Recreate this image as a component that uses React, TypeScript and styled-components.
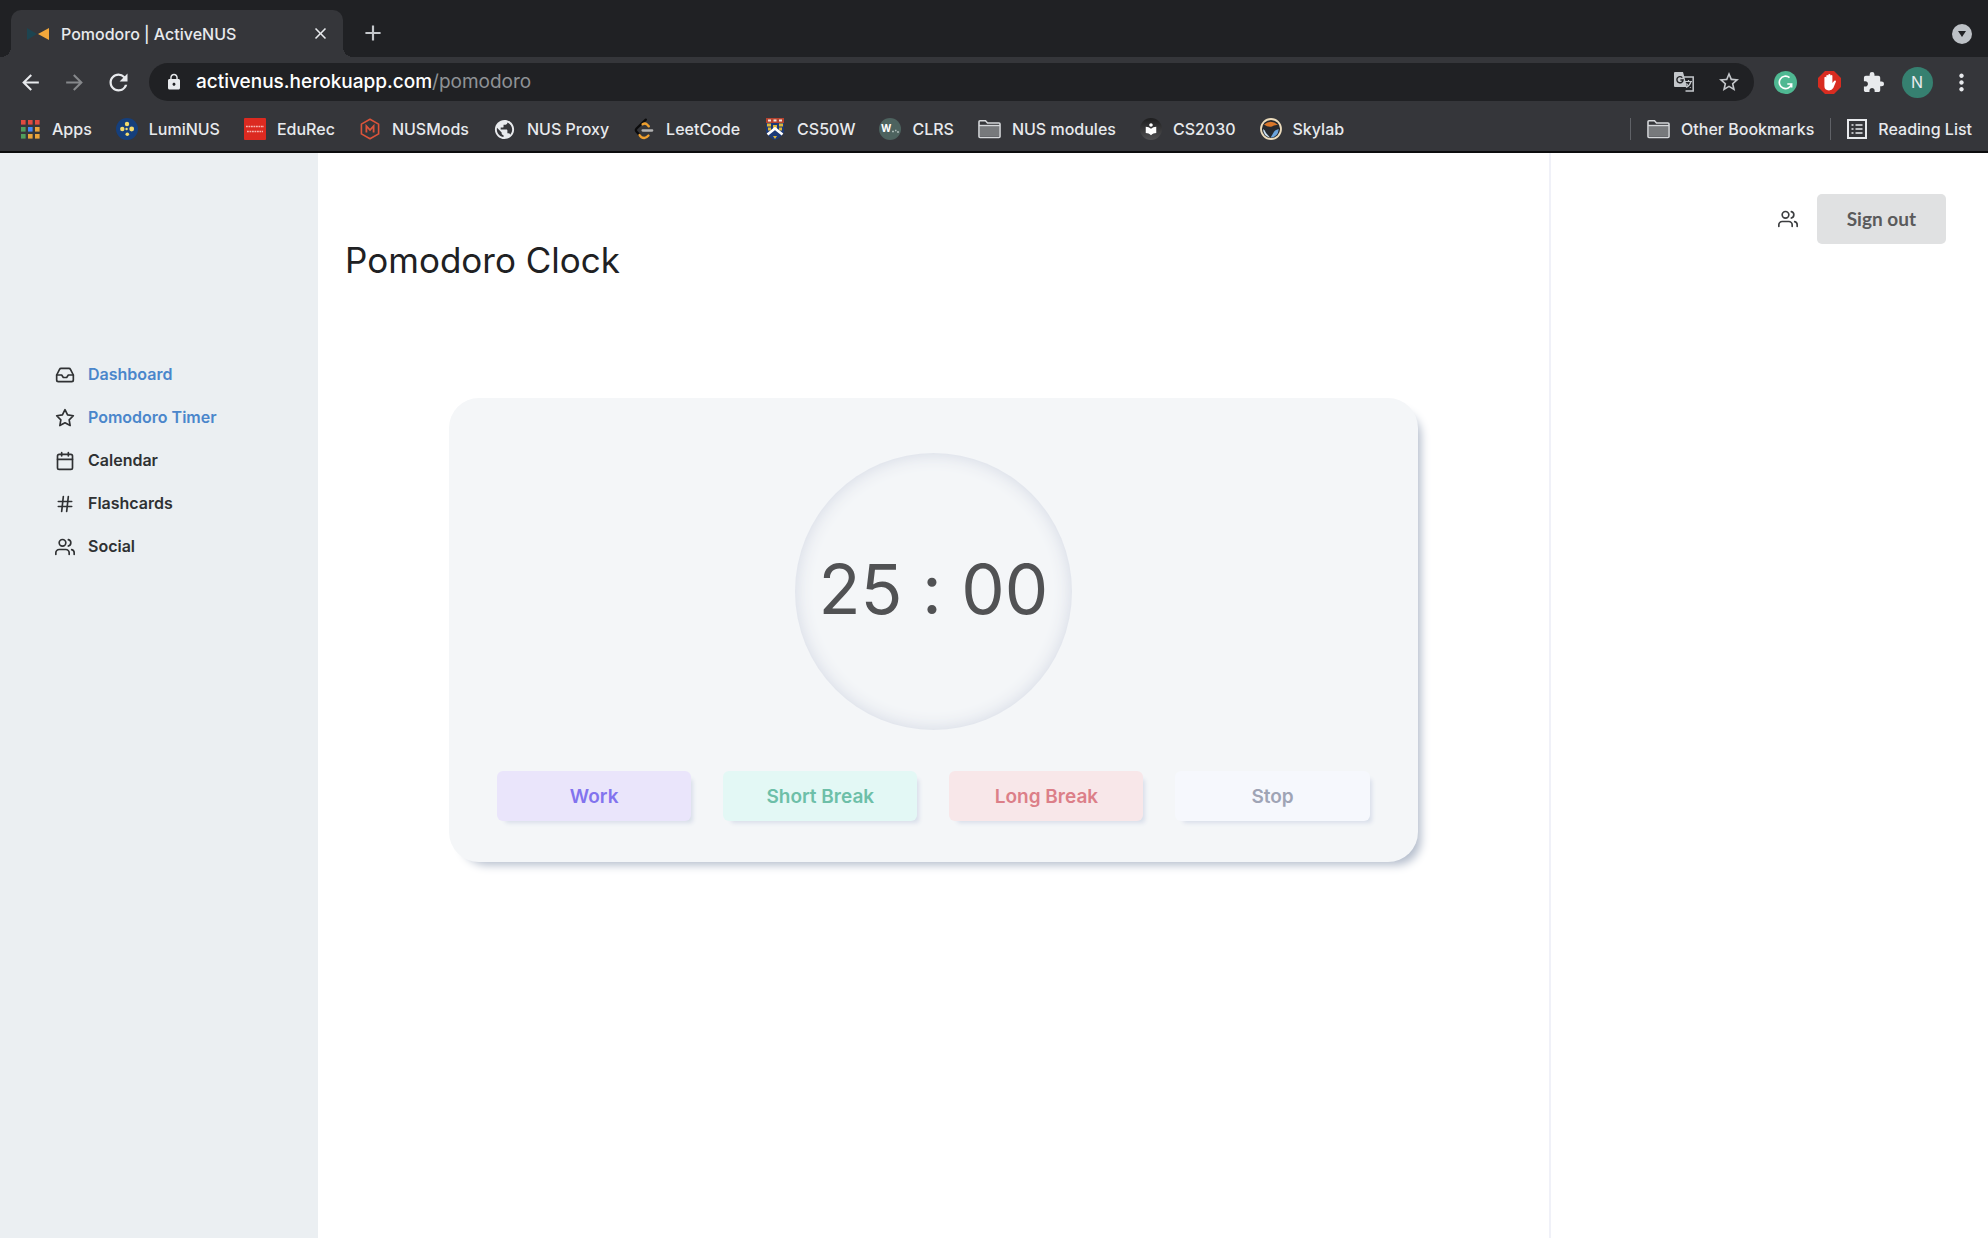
import React from 'react';
import styled, { createGlobalStyle } from 'styled-components';
import {
  MdAdd, MdArrowBack, MdArrowForward, MdClose, MdExtension, MdLocalLibrary,
  MdLock, MdMoreVert, MdPublic, MdRefresh, MdStarBorder,
} from 'react-icons/md';
import { FiCalendar, FiHash, FiInbox, FiStar, FiUsers } from 'react-icons/fi';

const uiFont = 'Inter, "Liberation Sans", sans-serif';

const GlobalStyle = createGlobalStyle`
  *, *::before, *::after { box-sizing: border-box; }
  body { margin: 0; background: #ffffff; font-family: ${uiFont}; }
  button, input { font: inherit; }
  a { color: inherit; text-decoration: none; }
  svg { display: block; flex: none; }
`;

const Page = styled.div`
  display: flex;
  flex-direction: column;
  min-height: 100vh;
`;

/* ---------- browser chrome ---------- */

const Chrome = styled.header`
  background: #35363a;
  border-bottom: 2px solid #0c0c0d;
  color: #e8eaed;
`;

const TabStrip = styled.div`
  display: flex;
  align-items: flex-end;
  height: 57px;
  padding: 0 16px 0 11px;
  background: #202124;
`;

const Tab = styled.div`
  position: relative;
  display: flex;
  align-items: center;
  width: 332px;
  height: 47px;
  padding: 0 12px 0 16px;
  border-radius: 10px 10px 0 0;
  background: #35363a;

  &::before, &::after {
    content: '';
    position: absolute;
    bottom: 0;
    width: 10px;
    height: 10px;
  }
  &::before {
    left: -10px;
    background: radial-gradient(circle at 0 0, transparent 10px, #35363a 10px);
  }
  &::after {
    right: -10px;
    background: radial-gradient(circle at 100% 0, transparent 10px, #35363a 10px);
  }
`;

const TabTitle = styled.span`
  flex: 1;
  margin-left: 12px;
  font-size: 16px;
  font-weight: 500;
  line-height: 20px;
  white-space: nowrap;
`;

const IconButton = styled.button<{ $size?: number; $dim?: boolean }>`
  display: flex;
  align-items: center;
  justify-content: center;
  flex: none;
  width: ${p => p.$size ?? 32}px;
  height: ${p => p.$size ?? 32}px;
  padding: 0;
  border: 0;
  border-radius: 50%;
  background: transparent;
  color: ${p => (p.$dim ? '#86888b' : '#e8eaed')};
  cursor: pointer;
`;

const NewTab = styled(IconButton)`
  margin: 0 auto 8px 14px;
  color: #c4c7cb;
`;

const TabSearch = styled(IconButton)`
  margin-bottom: 13px;
  background: #bdc1c6;
  color: #202124;
`;

const Toolbar = styled.div`
  display: flex;
  align-items: center;
  height: 50px;
  padding: 0 11px 0 14px;
`;

const NavButtons = styled.div`
  display: flex;
  gap: 12px;
  margin-right: 15px;
`;

const Omnibox = styled.div`
  display: flex;
  flex: 1;
  align-items: center;
  height: 38px;
  padding: 0 9px 0 16px;
  border-radius: 19px;
  background: #202124;
  font-size: 19px;
  line-height: 24px;
`;

const Origin = styled.label`
  margin-left: 13px;
  color: #ffffff;
  font-weight: 500;
`;

const PathInput = styled.input`
  flex: 1;
  min-width: 0;
  padding: 0;
  border: 0;
  outline: 0;
  background: transparent;
  color: #8f9296;
`;

const BoxTools = styled.div`
  display: flex;
  gap: 13px;
  color: #c4c7cb;
  button { color: inherit; }
`;

const Extensions = styled.div`
  display: flex;
  gap: 12px;
  margin-left: 15px;
`;

const Avatar = styled.span`
  display: flex;
  align-items: center;
  justify-content: center;
  width: 31px;
  height: 31px;
  border-radius: 50%;
  background: #368070;
  font-size: 16px;
  line-height: 20px;
`;

const BookmarkBar = styled.nav`
  display: flex;
  align-items: center;
  gap: 24px;
  height: 44px;
  padding: 0 16px 0 19px;
  font-size: 16px;
  font-weight: 500;
  line-height: 20px;
  white-space: nowrap;
`;

const Bookmark = styled.a`
  display: flex;
  align-items: center;
  gap: 11px;
`;

const OtherGroup = styled.div`
  display: flex;
  align-items: center;
  gap: 16px;
  margin-left: auto;
`;

const Divider = styled.span`
  width: 1px;
  height: 22px;
  background: #606267;
`;

/* ---------- application ---------- */

const Layout = styled.div`
  display: grid;
  flex: 1;
  grid-template-columns: 16% 62% 22%;
`;

const Sidebar = styled.nav`
  padding: 200px 24px 24px 55px;
  background: #ebeff2;
`;

const MenuList = styled.ul`
  margin: 0;
  padding: 0;
  list-style: none;
`;

const MenuLink = styled.a<{ $highlight?: boolean }>`
  display: flex;
  align-items: center;
  gap: 13px;
  height: 43px;
  color: ${p => (p.$highlight ? '#4a86cb' : '#2f3133')};
  font-size: 16px;
  font-weight: 600;
  line-height: 20px;
  svg { color: #2f3133; }
`;

const MenuLabel = styled.span`
  padding-bottom: 2px;
`;

const Main = styled.main`
  padding: 85px 27px 24px;
  border-right: 2px solid #f0f1f8;
`;

const Title = styled.h1`
  margin: 0 0 115px;
  color: #202123;
  font-size: 35px;
  font-weight: 400;
  line-height: 45px;
`;

const Card = styled.section`
  display: flex;
  flex-direction: column;
  align-items: center;
  gap: 41px;
  margin: 0 104px;
  padding: 55px 48px 41px;
  border-radius: 30px;
  background: #f4f6f8;
  box-shadow: 8px 8px 10px -5px #b4bdcc;
`;

const Dial = styled.div`
  display: flex;
  align-items: center;
  justify-content: center;
  width: 277px;
  height: 277px;
  padding-bottom: 6px;
  border-radius: 50%;
  box-shadow: inset 0 0 18px #d2d7e3;
  color: #515254;
  font-size: 69px;
  font-feature-settings: "calt" 0;
  line-height: 80px;
  white-space: nowrap;
`;

const Actions = styled.div`
  display: grid;
  grid-template-columns: repeat(4, 1fr);
  gap: 32px;
  width: 100%;
`;

const ActionButton = styled.button<{ $bg: string; $fg: string }>`
  height: 50px;
  padding: 2px 0 0;
  border: 0;
  border-radius: 6px;
  background: ${p => p.$bg};
  box-shadow: 5px 5px 4px -3px #d8deea;
  color: ${p => p.$fg};
  font-size: 19px;
  font-weight: 600;
  line-height: 24px;
  cursor: pointer;
`;

const Aside = styled.aside`
  display: flex;
  align-items: flex-start;
  justify-content: flex-end;
  gap: 19px;
  padding: 41px 42px;
  color: #3c3e40;
`;

const Account = styled.a`
  display: flex;
  align-items: center;
  height: 50px;
`;

const SignOut = styled.button`
  height: 50px;
  padding: 0 30px;
  border: 0;
  border-radius: 5px;
  background: #e0e1e2;
  color: #5a5a5b;
  font-family: Lato, "Liberation Sans", sans-serif;
  font-size: 19px;
  font-weight: 700;
  line-height: 24px;
  cursor: pointer;
`;

/* ---------- site icons ---------- */

const FavIcon = () => (
  <svg width="22" height="14" viewBox="0 0 22 14">
    <path d="M0 1l10 6-10 6z" fill="#1d4450" />
    <path d="M22 1L11 7l11 6z" fill="#f2a73b" />
  </svg>
);

const AppsIcon = () => {
  const colors = ['#e04a3f', '#e04a3f', '#e04a3f', '#4f9d5c', '#4285f4', '#e8a33a', '#4f9d5c', '#e8a33a', '#e8a33a'];
  return (
    <svg width="22" height="22" viewBox="0 0 22 22">
      {colors.map((c, i) => (
        <rect key={i} x={2 + (i % 3) * 7} y={2 + Math.floor(i / 3) * 7} width="4.6" height="4.6" fill={c} />
      ))}
    </svg>
  );
};

const LumiIcon = () => (
  <svg width="22" height="22" viewBox="0 0 22 22">
    <circle cx="11" cy="11" r="11" fill="#153f7c" />
    <g fill="#f5dc6d">
      <circle cx="11" cy="6" r="2.2" /><circle cx="6.3" cy="11" r="2.2" />
      <circle cx="15.7" cy="11" r="2.4" /><circle cx="11.3" cy="16.3" r="1.8" />
      <circle cx="10.6" cy="11" r="1.2" />
    </g>
  </svg>
);

const EduRecIcon = () => (
  <svg width="22" height="22" viewBox="0 0 22 22">
    <rect width="22" height="22" rx="1" fill="#dc2a20" />
    <path d="M2 8.5h18M3 13.5h16" stroke="#f6b5af" strokeWidth="1.3" strokeDasharray="1.8 .7" />
  </svg>
);

const ModsIcon = () => (
  <svg width="22" height="22" viewBox="0 0 22 22" fill="none" stroke="#dd543a">
    <path d="M11 1.2l8.6 4.9v9.8L11 20.8l-8.6-4.9V6.1z" strokeWidth="1.6" strokeLinejoin="round" />
    <path d="M7.4 14.5V8l3.6 4 3.6-4v6.5" strokeWidth="1.8" />
  </svg>
);

const LeetIcon = () => (
  <svg width="22" height="22" viewBox="0 0 22 22" fill="none" strokeLinecap="round" strokeWidth="2.3">
    <path d="M12.8 1.6L3.6 10.5q-1.5 1.6 0 3.2l2.7 2.9" stroke="#0b0b0c" />
    <path d="M9.6 6.3q2.4-1.6 4.2 0l2 2.1M6.5 17q1.5 3 4.7 3 2.3-.2 4.3-2.5" stroke="#efa02f" />
    <path d="M9.6 12.5h9.6" stroke="#b3b3b3" />
  </svg>
);

const CrestIcon = () => (
  <svg width="22" height="22" viewBox="0 0 22 22">
    <path d="M2 0h18v5H2z" fill="#b5432f" />
    <path d="M4 1.5h3v2H4zM9.5 1.5h3v2h-3zM15 1.5h3v2h-3z" fill="#f4e9e2" />
    <path d="M2 5h18v9q-2 5-9 8-7-3-9-8z" fill="#1c3a78" />
    <path d="M3 5.5h4v3H3zM15 5.5h4v3h-4zM9 7h4v4H9zM4 9.5h3v3H4zM15 9.5h3v3h-3zM9 18h4l-2 3z" fill="#dcb53a" />
    <path d="M3.5 16.5L11 10.5l7.5 6" stroke="#fff" strokeWidth="2.6" fill="none" />
  </svg>
);

const ClrsIcon = () => (
  <svg width="22" height="22" viewBox="0 0 22 22">
    <circle cx="11" cy="11" r="11" fill="#4d635f" />
    <text x="2" y="14" fontSize="10" fontWeight="700" fontFamily={uiFont} fill="#fff">W</text>
    <path d="M13 13.5h2M16 12.5h1.5M18 14h2" stroke="#a9b8b5" strokeWidth="1.5" />
  </svg>
);

const FolderIcon = () => (
  <svg width="23" height="20" viewBox="0 0 23 20" fill="none" stroke="#d5d7da" strokeWidth="1.6">
    <path d="M1 17.5V2.8q0-1 1-1h5.5l2 2.2H21q1 0 1 1v12.5q0 1-1 1H2q-1 0-1-1z" />
    <path d="M2 7h19v10.5H2z" fill="#77797c" stroke="none" />
    <path d="M1 6.5h21" strokeWidth="1.4" />
  </svg>
);

const Roundel = styled.span`
  display: flex;
  align-items: center;
  justify-content: center;
  width: 22px;
  height: 22px;
  border-radius: 50%;
  background: linear-gradient(#1e1e1f, #505052);
  color: #ffffff;
`;

const SkylabIcon = () => (
  <svg width="22" height="22" viewBox="0 0 22 22">
    <circle cx="11" cy="11" r="10" fill="#26292e" stroke="#ecdcbc" strokeWidth="1.8" />
    <path d="M4 6.500Q11 1 18 7q-4-.5-6 1.500-4 1-8-2z" fill="#d9772a" />
    <path d="M3 11q2 1 3 4l4 4.500Q3.500 18.500 3 11z" fill="#c9dff0" />
    <path d="M18.800 11q-4.500 1-5.500 4l-2.800 4.800q7.500-.8 8.300-8.800z" fill="#6aa3dc" />
  </svg>
);

const ListIcon = () => (
  <svg width="20" height="20" viewBox="0 0 20 20" fill="none" stroke="#e8eaed" strokeWidth="2">
    <rect x="1" y="1" width="18" height="18" />
    <path d="M4.5 6h2M8.5 6h7M4.5 10h2M8.5 10h7M4.5 14h2M8.5 14h7" strokeWidth="1.6" />
  </svg>
);

const TranslateIcon = () => (
  <svg width="22" height="22" viewBox="0 0 22 22" fill="none">
    <path d="M11 6h9.2v14H12.5" stroke="#c4c7cb" strokeWidth="1.5" />
    <path d="M12 10.5h7M15.5 9v1.5M18 10.5q-1 4-5 6M13.5 12.5q1.500 3 4.500 4" stroke="#c4c7cb" strokeWidth="1.2" />
    <path d="M2 1h8l4 15H2q-1 0-1-1V2q0-1 1-1z" fill="#c4c7cb" />
    <path d="M9.3 6.6a3.1 3.1 0 1 0 .8 2.4H7.4" stroke="#202124" strokeWidth="1.4" />
  </svg>
);

const GrammarIcon = () => (
  <svg width="23" height="23" viewBox="0 0 23 23" fill="none">
    <circle cx="11.5" cy="11.5" r="11.5" fill="#4fb892" />
    <path d="M15.5 6.6a6.2 6.2 0 1 0 2 6.4h-4.2M17.6 12.6v4" stroke="#fff" strokeWidth="1.7" />
  </svg>
);

const BlockIcon = () => (
  <svg width="23" height="23" viewBox="0 0 23 23">
    <path d="M7 0h9l7 7v9l-7 7H7l-7-7V7z" fill="#d82c20" />
    <path
      d="M6.400 13V6.400q.9-1.200 1.900 0V10V4.600q1-1.200 2 0V9.500V3.600q1-1.100 2.100 0v6V4.600q1-1.100 2 0V12l1.900-2.200q1.500-.6 1.700.7l-2.700 6.500q-1.300 2.400-4.300 2.400-4.600 0-4.600-4.400z"
      fill="#fff"
    />
  </svg>
);

/* ---------- data ---------- */

const bookmarks: [string, React.ReactNode][] = [
  ['Apps', <AppsIcon />],
  ['LumiNUS', <LumiIcon />],
  ['EduRec', <EduRecIcon />],
  ['NUSMods', <ModsIcon />],
  ['NUS Proxy', <MdPublic size={23} />],
  ['LeetCode', <LeetIcon />],
  ['CS50W', <CrestIcon />],
  ['CLRS', <ClrsIcon />],
  ['NUS modules', <FolderIcon />],
  ['CS2030', <Roundel><MdLocalLibrary size={14} /></Roundel>],
  ['Skylab', <SkylabIcon />],
];

const menu = [
  { label: 'Dashboard', Icon: FiInbox, highlight: true },
  { label: 'Pomodoro Timer', Icon: FiStar, highlight: true },
  { label: 'Calendar', Icon: FiCalendar },
  { label: 'Flashcards', Icon: FiHash },
  { label: 'Social', Icon: FiUsers },
];

const actions = [
  { label: 'Work', bg: '#eae5fb', fg: '#8273ee' },
  { label: 'Short Break', bg: '#e3f8f5', fg: '#6dbfa8' },
  { label: 'Long Break', bg: '#f8e7e9', fg: '#dc7f88' },
  { label: 'Stop', bg: '#f6f8fd', fg: '#9fa4b5' },
];

export default function App() {
  return (
    <Page>
      <GlobalStyle />
      <Chrome>
        <TabStrip>
          <Tab>
            <FavIcon />
            <TabTitle>Pomodoro | ActiveNUS</TabTitle>
            <IconButton $size={22} aria-label="Close tab"><MdClose size={19} /></IconButton>
          </Tab>
          <NewTab aria-label="New tab"><MdAdd size={26} /></NewTab>
          <TabSearch $size={20} aria-label="Search tabs">
            <svg width="10" height="8" viewBox="0 0 10 8"><path d="M1 1h8L5 7z" fill="currentColor" /></svg>
          </TabSearch>
        </TabStrip>
        <Toolbar>
          <NavButtons>
            <IconButton aria-label="Back"><MdArrowBack size={25} /></IconButton>
            <IconButton $dim aria-label="Forward"><MdArrowForward size={25} /></IconButton>
            <IconButton aria-label="Reload"><MdRefresh size={27} /></IconButton>
          </NavButtons>
          <Omnibox>
            <MdLock size={18} />
            <Origin htmlFor="address">activenus.herokuapp.com</Origin>
            <PathInput id="address" defaultValue="/pomodoro" />
            <BoxTools>
              <IconButton aria-label="Translate"><TranslateIcon /></IconButton>
              <IconButton aria-label="Bookmark this page"><MdStarBorder size={24} /></IconButton>
            </BoxTools>
          </Omnibox>
          <Extensions>
            <IconButton aria-label="Grammar"><GrammarIcon /></IconButton>
            <IconButton aria-label="Blocker"><BlockIcon /></IconButton>
            <IconButton aria-label="Extensions"><MdExtension size={23} /></IconButton>
            <IconButton aria-label="Profile"><Avatar>N</Avatar></IconButton>
            <IconButton aria-label="More"><MdMoreVert size={27} /></IconButton>
          </Extensions>
        </Toolbar>
        <BookmarkBar aria-label="Bookmarks">
          {bookmarks.map(([label, icon]) => (
            <Bookmark href="#" key={label}>{icon}{label}</Bookmark>
          ))}
          <OtherGroup>
            <Divider />
            <Bookmark href="#"><FolderIcon />Other Bookmarks</Bookmark>
            <Divider />
            <Bookmark href="#"><ListIcon />Reading List</Bookmark>
          </OtherGroup>
        </BookmarkBar>
      </Chrome>
      <Layout>
        <Sidebar aria-label="Main menu">
          <MenuList>
            {menu.map(({ label, Icon, highlight }) => (
              <li key={label}>
                <MenuLink href="#" $highlight={highlight}>
                  <Icon size={20} />
                  <MenuLabel>{label}</MenuLabel>
                </MenuLink>
              </li>
            ))}
          </MenuList>
        </Sidebar>
        <Main>
          <Title>Pomodoro Clock</Title>
          <Card>
            <Dial role="timer">25 : 00</Dial>
            <Actions>
              {actions.map(a => (
                <ActionButton key={a.label} $bg={a.bg} $fg={a.fg}>{a.label}</ActionButton>
              ))}
            </Actions>
          </Card>
        </Main>
        <Aside>
          <Account href="#" aria-label="Account"><FiUsers size={20} /></Account>
          <SignOut>Sign out</SignOut>
        </Aside>
      </Layout>
    </Page>
  );
}
